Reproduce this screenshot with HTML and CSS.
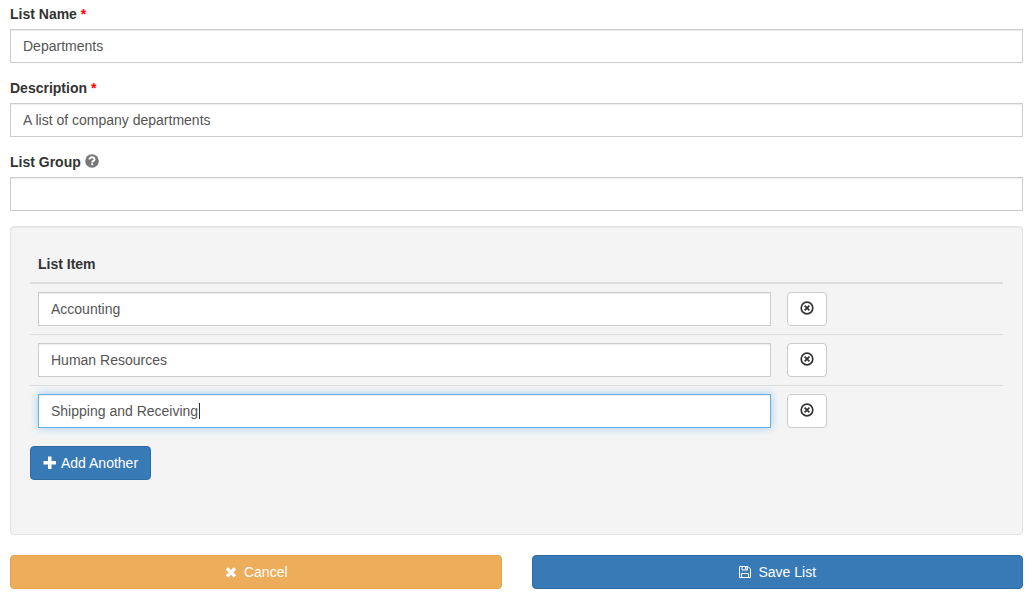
FILE: index.html
```
<!DOCTYPE html>
<html lang="en">
  <head>
    <meta charset="UTF-8" />
    <meta name="viewport" content="width=device-width, initial-scale=1.0" />
    <title>Edit List</title>
    <link rel="stylesheet" href="styles.css">
  </head>
  <body>
    <svg class="sprite" aria-hidden="true">
      <symbol id="remove-circle" viewBox="0 0 14 14">
        <circle cx="7" cy="7" r="5.8" fill="none" stroke="currentColor" stroke-width="1.7" />
        <path d="M4.6 4.6l4.8 4.8M9.4 4.6l-4.8 4.8" stroke="currentColor" stroke-width="1.7" />
      </symbol>
    </svg>
    <form class="list-form">
      <div class="form-group">
        <label for="listName">List Name <span class="required">*</span></label>
        <input type="text" id="listName" class="form-control" value="Departments" />
      </div>
      <div class="form-group">
        <label for="description">Description <span class="required">*</span></label>
        <input type="text" id="description" class="form-control" value="A list of company departments" />
      </div>
      <div class="form-group">
        <label for="listGroup">List Group
          <svg class="icon help" viewBox="0 0 14 14" aria-hidden="true">
            <circle cx="7" cy="7" r="6.8" fill="currentColor" />
            <path d="M4.5 5.6C4.5 4 5.5 3.3 7 3.3s2.5.8 2.5 2.1c0 1.5-2.3 1.5-2.3 3" fill="none" stroke="#fff" stroke-width="1.9" />
            <path d="M6.2 9.3h2v1.9h-2z" fill="#fff" />
          </svg>
        </label>
        <input type="text" id="listGroup" class="form-control" />
      </div>

      <div class="well">
        <table>
          <thead>
            <tr>
              <th class="item-col" id="itemHead">List Item</th>
              <th></th>
            </tr>
          </thead>
          <tbody>
            <tr>
              <td><input type="text" class="form-control" aria-labelledby="itemHead" value="Accounting" /></td>
              <td>
                <button type="button" class="btn btn-default" aria-label="Remove Accounting">
                  <svg class="icon"><use href="#remove-circle" /></svg>
                </button>
              </td>
            </tr>
            <tr>
              <td><input type="text" class="form-control" aria-labelledby="itemHead" value="Human Resources" /></td>
              <td>
                <button type="button" class="btn btn-default" aria-label="Remove Human Resources">
                  <svg class="icon"><use href="#remove-circle" /></svg>
                </button>
              </td>
            </tr>
            <tr>
              <td>
                <div class="editing">
                  <input type="text" class="form-control active" aria-labelledby="itemHead" value="Shipping and Receiving" />
                  <span class="caret"></span>
                </div>
              </td>
              <td>
                <button type="button" class="btn btn-default" aria-label="Remove Shipping and Receiving">
                  <svg class="icon"><use href="#remove-circle" /></svg>
                </button>
              </td>
            </tr>
          </tbody>
        </table>
        <button type="button" class="btn btn-primary">
          <svg class="icon" viewBox="0 0 14 14" aria-hidden="true">
            <path d="M5 .5h3.500v4.500H13v3.500H8.500V13H5V8.500H.5V5H5z" fill="currentColor" />
          </svg>
          <span>Add Another</span>
        </button>
      </div>

      <div class="actions">
        <button type="button" class="btn btn-warning">
          <svg class="icon" viewBox="0 0 14 14" aria-hidden="true">
            <path d="M4.2 2.2L7 5l2.8-2.8 2.4 2.4L9.4 7.400l2.800 2.800-2.400 2.400L7 9.800l-2.800 2.800-2.400-2.400 2.800-2.800-2.800-2.800z" fill="currentColor" />
          </svg>
          <span>Cancel</span>
        </button>
        <button type="submit" class="btn btn-primary">
          <svg class="icon" viewBox="0 0 14 14" aria-hidden="true">
            <path d="M1.5 1.5h8.500l2.500 2.500v8.500h-11zM4 1.500v3.500h5.500V1.500M3.500 12.500V8.500h7v4" fill="none" stroke="currentColor" />
            <path d="M7 2h1.500v2.500H7z" fill="currentColor" />
          </svg>
          <span>Save List</span>
        </button>
      </div>
    </form>
  </body>
</html>
```
FILE: styles.css
```
* {
  box-sizing: border-box;
}
body {
  margin: 0;
  font-family: "Helvetica Neue", Helvetica, "Liberation Sans", Arial, sans-serif;
  font-size: 14px;
  line-height: 20px;
  color: #333;
  background: white;
}
.sprite {
  display: none;
}
.list-form {
  padding: 4px 11px 10px 10px;
}
.form-group {
  margin-bottom: 15px;
}
label {
  display: block;
  margin-bottom: 5px;
  font-weight: bold;
}
.required {
  color: red;
}
.icon {
  width: 14px;
  height: 14px;
}
.help {
  color: #777;
  vertical-align: -1px;
}
.form-control {
  display: block;
  width: 100%;
  height: 34px;
  padding: 6px 12px;
  font: inherit;
  color: #555;
  background: white;
  border: 1px solid #ccc;
  border-radius: 0;
  box-shadow: inset 0 1px 1px rgba(0, 0, 0, 0.075);
}
.form-control:focus,
.form-control.active {
  border-color: #66afe9;
  outline: 0;
  box-shadow: inset 0 1px 1px rgba(0, 0, 0, 0.075),
    0 0 8px rgba(102, 175, 233, 0.6);
}
.editing {
  position: relative;
}
.caret {
  position: absolute;
  top: 9px;
  left: 161px;
  width: 1px;
  height: 16px;
  background: #333;
}
.well {
  padding: 19px 19px 54px;
  margin-bottom: 20px;
  background: #f4f4f4;
  border: 1px solid #e3e3e3;
  border-radius: 4px;
  box-shadow: inset 0 1px 1px rgba(0, 0, 0, 0.05);
}
table {
  width: 100%;
  margin-bottom: 10px;
  border-spacing: 0;
}
th,
td {
  padding: 8px;
  text-align: left;
}
th {
  border-bottom: 2px solid #ddd;
}
tr + tr td {
  border-top: 1px solid #ddd;
}
.item-col {
  width: 77%;
}
.btn {
  display: flex;
  align-items: center;
  justify-content: center;
  height: 34px;
  padding: 6px 12px;
  font: inherit;
  color: white;
  border: 1px solid transparent;
  border-radius: 4px;
  cursor: pointer;
}
.btn-default {
  padding-bottom: 8px;
  color: #333;
  background: white;
  border-color: #ccc;
}
.btn-primary {
  gap: 4px;
  background: #387ab6;
  border-color: #2e6da4;
}
.btn-warning {
  background: #edad5a;
  border-color: #eba54b;
}
.actions {
  display: grid;
  grid-template-columns: 1fr 1fr;
  gap: 30px;
}
.actions .btn {
  gap: 6px;
}
```
